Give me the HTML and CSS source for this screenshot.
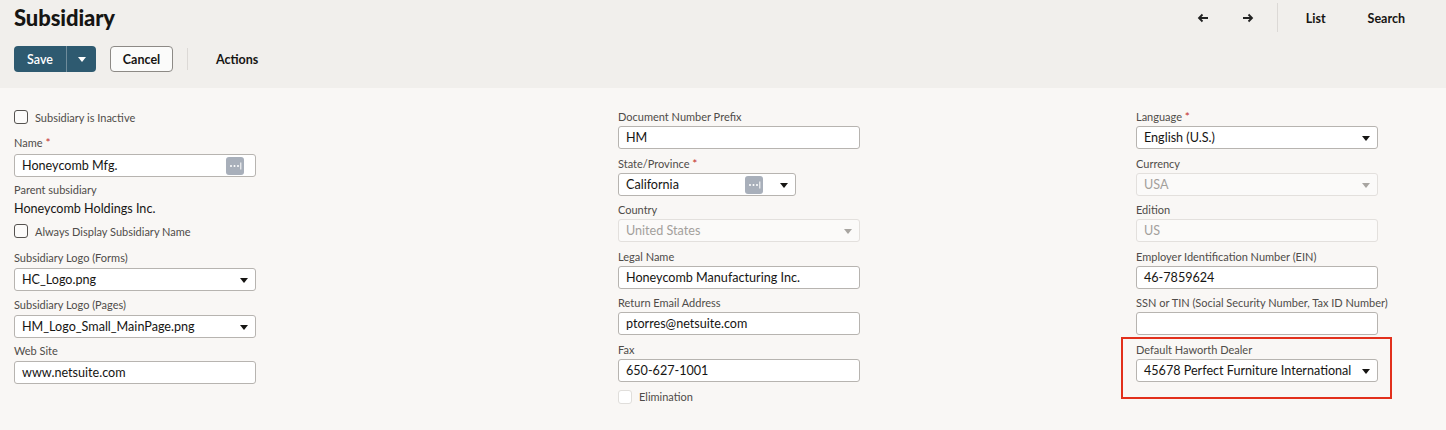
FILE: index.html
```html
<!DOCTYPE html>
<html>
<head>
<meta charset="utf-8">
<link rel="stylesheet" href="styles.css">
</head>
<body>
<header class="header">
  <div class="topbar">
    <h1 class="title">Subsidiary</h1>
    <nav class="nav">
      <span class="nav-arrow"><svg width="12" height="10" viewBox="0 0 12 10"><path d="M11 5H2M5.5 1.5L2 5l3.5 3.5" fill="none" stroke="#222" stroke-width="1.8"/></svg></span>
      <span class="nav-arrow"><svg width="12" height="10" viewBox="0 0 12 10"><path d="M1 5h9M6.5 1.5L10 5 6.5 8.5" fill="none" stroke="#222" stroke-width="1.8"/></svg></span>
      <span class="nav-sep"></span>
      <span class="nav-link nav-list">List</span>
      <span class="nav-link">Search</span>
    </nav>
  </div>
  <div class="toolbar">
    <div class="split-btn">
      <span class="save">Save</span>
      <span class="save-drop"><svg width="8" height="5" viewBox="0 0 8 5"><path d="M0 0h8L4 5z" fill="#fff"/></svg></span>
    </div>
    <span class="btn-cancel">Cancel</span>
    <span class="tool-sep"></span>
    <span class="actions">Actions</span>
  </div>
</header>

<main class="form">
  <section class="col col-1">
    <label class="check-row"><span class="box"></span><span class="check-label">Subsidiary is Inactive</span></label>
    <div class="lbl name-lbl">Name <span class="req">*</span></div>
    <div class="input with-icon">Honeycomb Mfg.<span class="ellipsis"><svg width="18" height="18" viewBox="0 0 18 18"><rect width="18" height="18" rx="3" fill="#a8afba"/><circle cx="5" cy="9" r="1" fill="#fff"/><circle cx="8.5" cy="9" r="1" fill="#fff"/><circle cx="12" cy="9" r="1" fill="#fff"/><rect x="14.3" y="5.5" width="1" height="7" fill="#fff"/></svg></span></div>
    <div class="lbl parent-lbl">Parent subsidiary</div>
    <div class="static-value">Honeycomb Holdings Inc.</div>
    <label class="check-row always"><span class="box"></span><span class="check-label">Always Display Subsidiary Name</span></label>
    <div class="lbl logo-forms-lbl">Subsidiary Logo (Forms)</div>
    <div class="input select">HC_Logo.png<span class="caret"></span></div>
    <div class="lbl logo-pages-lbl">Subsidiary Logo (Pages)</div>
    <div class="input select">HM_Logo_Small_MainPage.png<span class="caret"></span></div>
    <div class="lbl web-lbl">Web Site</div>
    <div class="input">www.netsuite.com</div>
  </section>

  <section class="col col-2">
    <div class="field">
      <div class="lbl">Document Number Prefix</div>
      <div class="input">HM</div>
    </div>
    <div class="field">
      <div class="lbl">State/Province <span class="req">*</span></div>
      <div class="input select short">California<span class="ellipsis state-ellipsis"><svg width="18" height="18" viewBox="0 0 18 18"><rect width="18" height="18" rx="3" fill="#a8afba"/><circle cx="5" cy="9" r="1" fill="#fff"/><circle cx="8.5" cy="9" r="1" fill="#fff"/><circle cx="12" cy="9" r="1" fill="#fff"/><rect x="14.3" y="5.5" width="1" height="7" fill="#fff"/></svg></span><span class="caret"></span></div>
    </div>
    <div class="field">
      <div class="lbl">Country</div>
      <div class="input select disabled">United States<span class="caret"></span></div>
    </div>
    <div class="field">
      <div class="lbl">Legal Name</div>
      <div class="input">Honeycomb Manufacturing Inc.</div>
    </div>
    <div class="field">
      <div class="lbl">Return Email Address</div>
      <div class="input">ptorres@netsuite.com</div>
    </div>
    <div class="field">
      <div class="lbl">Fax</div>
      <div class="input">650-627-1001</div>
    </div>
    <label class="check-row elim"><span class="box light"></span><span class="check-label">Elimination</span></label>
  </section>

  <section class="col col-3">
    <div class="field">
      <div class="lbl">Language <span class="req">*</span></div>
      <div class="input select">English (U.S.)<span class="caret"></span></div>
    </div>
    <div class="field">
      <div class="lbl">Currency</div>
      <div class="input select disabled">USA<span class="caret"></span></div>
    </div>
    <div class="field">
      <div class="lbl">Edition</div>
      <div class="input disabled">US</div>
    </div>
    <div class="field">
      <div class="lbl">Employer Identification Number (EIN)</div>
      <div class="input">46-7859624</div>
    </div>
    <div class="field">
      <div class="lbl">SSN or TIN (Social Security Number, Tax ID Number)</div>
      <div class="input"></div>
    </div>
    <div class="field highlight">
      <div class="lbl">Default Haworth Dealer</div>
      <div class="input select">45678 Perfect Furniture International<span class="caret"></span></div>
    </div>
  </section>
</main>
</body>
</html>
```

FILE: styles.css
```css
* { box-sizing: border-box; }
html, body { margin: 0; padding: 0; }
body {
  width: 1446px;
  height: 430px;
  overflow: hidden;
  background: #f9f7f5;
  font-family: Lato, "Open Sans", Arial, sans-serif;
  color: #161513;
}

.header {
  background: #f1efec;
  height: 88px;
  padding: 0 0 0 14px;
}
.topbar {
  display: flex;
  justify-content: space-between;
  align-items: center;
  height: 36px;
}
.title {
  margin: 0;
  font-size: 22px;
  font-weight: 900;
  letter-spacing: -0.1px;
  color: #161513;
  line-height: 36px;
}
.nav {
  display: flex;
  align-items: center;
  height: 36px;
  padding-right: 41px;
}
.nav-arrow {
  display: flex;
  align-items: center;
  width: 12px;
  height: 36px;
  margin-left: 33px;
}
.nav-arrow:first-child { margin-left: 0; }
.nav-sep {
  width: 1px;
  height: 29px;
  background: #dcd9d6;
  margin-left: 23px;
  margin-right: 28px;
  align-self: flex-start;
  margin-top: 3px;
}
.nav-link {
  font-size: 12.5px;
  font-weight: 700;
  color: #161513;
}
.nav-list { margin-right: 42px; }

.toolbar {
  display: flex;
  align-items: center;
  margin-top: 10px;
  height: 26px;
}
.split-btn {
  display: flex;
  height: 26px;
  border-radius: 4px;
  overflow: hidden;
  background: #2e5a70;
}
.save {
  width: 52px;
  display: flex;
  align-items: center;
  justify-content: center;
  color: #fff;
  font-size: 12.5px;
  font-weight: 600;
}
.save-drop {
  width: 30px;
  border-left: 1px solid #6f8c9b;
  display: flex;
  align-items: center;
  justify-content: center;
}
.btn-cancel {
  margin-left: 14px;
  width: 63px;
  height: 26px;
  border: 1px solid #8d8a86;
  border-radius: 4px;
  background: #fbfbfa;
  display: flex;
  align-items: center;
  justify-content: center;
  font-size: 12.5px;
  font-weight: 700;
}
.tool-sep {
  width: 1px;
  height: 22px;
  background: #dcd9d6;
  margin-left: 14px;
}
.actions {
  margin-left: 28px;
  font-size: 12.5px;
  font-weight: 700;
}

.form {
  display: grid;
  grid-template-columns: 604px 518px 242px;
  padding: 22px 0 0 14px;
}
.col { width: 242px; display: flex; flex-direction: column; }

.lbl {
  font-size: 11px;
  line-height: 14px;
  height: 14px;
  color: #4f4c49;
  white-space: nowrap;
}
.req { color: #c4302b; font-size: 12px; }

.input {
  position: relative;
  height: 23px;
  border: 1px solid #b7b4b0;
  border-radius: 3px;
  background: #fff;
  font-size: 12.6px;
  line-height: 21px;
  padding-left: 7px;
  color: #161513;
  white-space: nowrap;
}
.input.short { width: 178px; }
.input.disabled {
  border-color: #e3e0dd;
  background: #fbfaf9;
  color: #a3a09c;
}
.caret {
  position: absolute;
  right: 7px;
  top: 9px;
  width: 0;
  height: 0;
  border-left: 4.5px solid transparent;
  border-right: 4.5px solid transparent;
  border-top: 5px solid #161513;
}
.disabled .caret { border-top-color: #a8a5a1; }
.ellipsis {
  position: absolute;
  right: 11px;
  top: 2px;
  width: 18px;
  height: 18px;
  display: flex;
}
.state-ellipsis { right: 32px; }

.check-row {
  display: flex;
  align-items: center;
  height: 14px;
}
.box {
  width: 14px;
  height: 14px;
  border: 1.3px solid #55524f;
  border-radius: 3px;
  background: #fcfbfa;
}
.box.light { border-color: #e0dedb; background: #fff; }
.check-label {
  margin-left: 7px;
  font-size: 11px;
  color: #4f4c49;
}

.name-lbl { margin-top: 12px; }
.name-lbl + .input { margin-top: 4px; }
.parent-lbl { margin-top: 6px; }
.static-value { margin-top: 3px; font-size: 12.6px; line-height: 18px; height: 18px; }
.always { margin-top: 6px; }
.logo-forms-lbl { margin-top: 13px; }
.logo-pages-lbl { margin-top: 7px; }
.web-lbl { margin-top: 6px; }
.col-1 .lbl + .input.select, .web-lbl + .input { margin-top: 3px; }

.field { display: flex; flex-direction: column; margin-bottom: 7.6px; }
.field .lbl { margin-bottom: 2px; }
.field.highlight { position: relative; }
.field.highlight::after {
  content: "";
  position: absolute;
  top: -6px;
  left: -15px;
  right: -14px;
  bottom: -17px;
  border: 2px solid #e2301c;
}
.elim { margin-top: 0; }
.elim .check-label { color: #4f4c49; }
```
